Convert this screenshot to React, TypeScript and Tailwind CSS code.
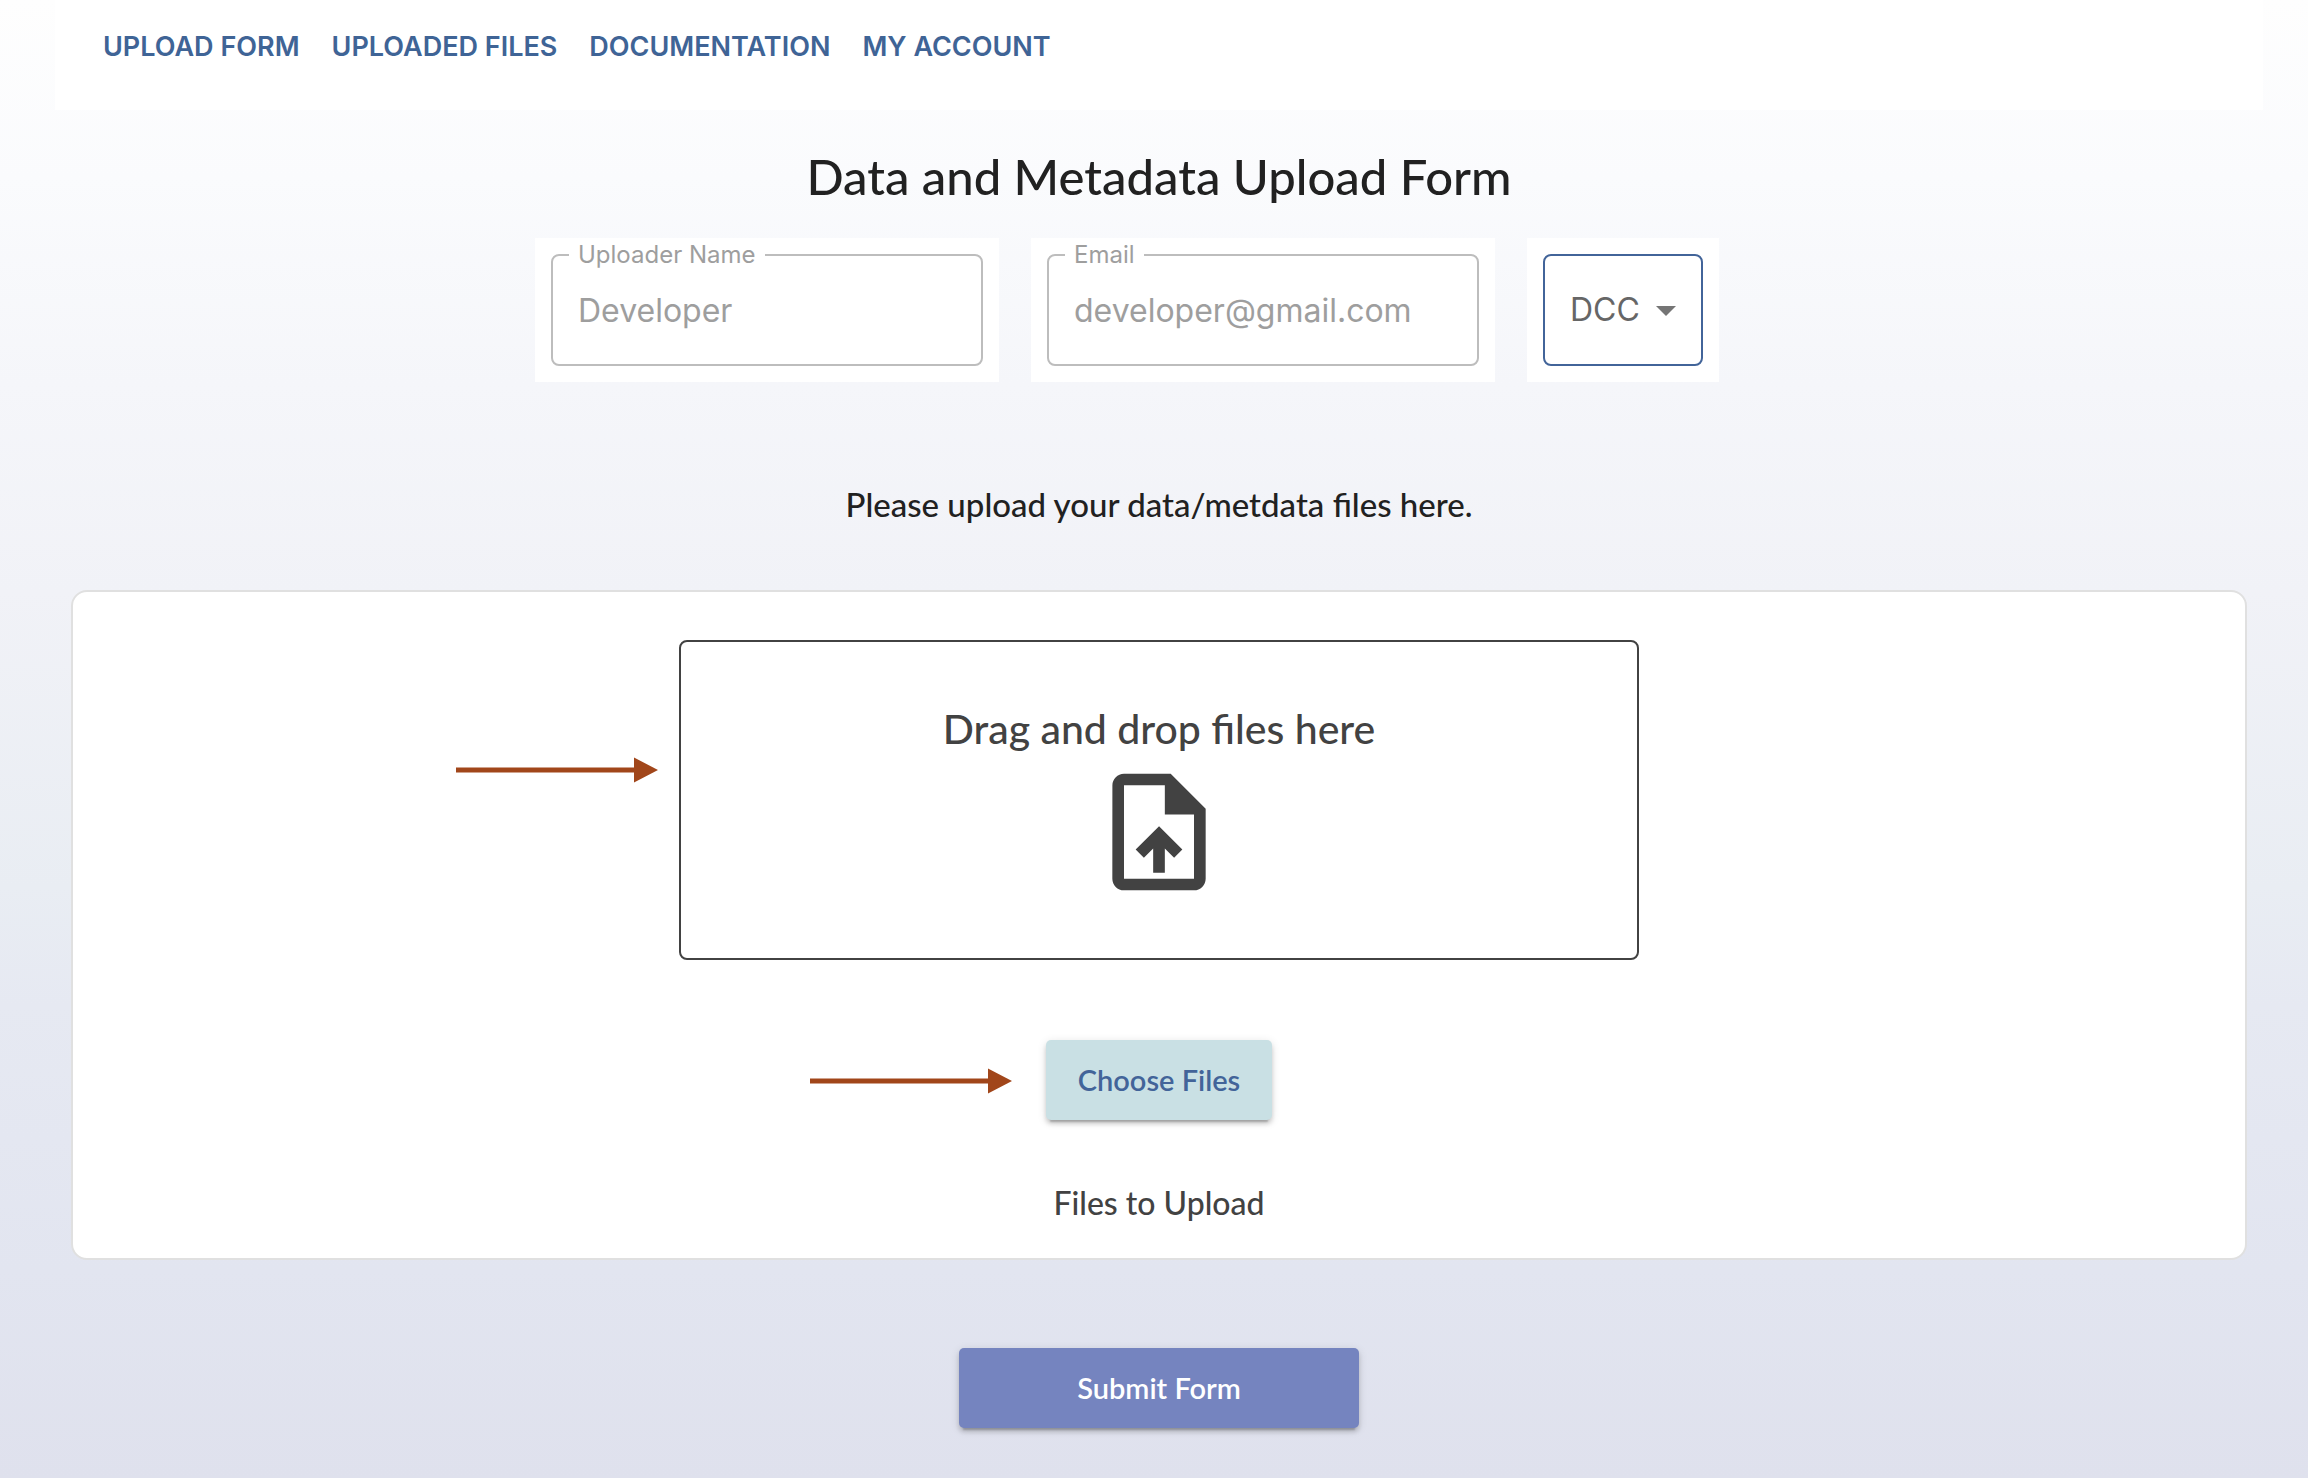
import React from "react";

const navLinks = ["UPLOAD FORM", "UPLOADED FILES", "DOCUMENTATION", "MY ACCOUNT"];

const raised =
  "shadow-[0_6px_2px_-4px_rgba(0,0,0,0.2),0_4px_4px_0_rgba(0,0,0,0.14),0_2px_10px_0_rgba(0,0,0,0.12)]";

function TextField({ id, label, value, type }: { id: string; label: string; value: string; type: string }) {
  return (
    <div className="w-[464px] bg-white px-4 pb-4 font-['Inter',sans-serif] font-normal text-[#9e9e9e]">
      <fieldset className="rounded-lg border-2 border-[#bdbdbd] px-4 pb-4">
        <legend className="px-[9px] text-2xl leading-[34px]">
          <label htmlFor={id}>{label}</label>
        </legend>
        <input
          id={id}
          type={type}
          defaultValue={value}
          disabled
          className="block h-[76px] w-full bg-transparent px-[9px] text-[32px]"
        />
      </fieldset>
    </div>
  );
}

function Arrow({ className }: { className: string }) {
  return (
    <svg aria-hidden="true" viewBox="0 0 202 26" className={`absolute h-[26px] w-[202px] ${className}`}>
      <path d="M0 10.5h178V0.5l24 12.5-24 12.5v-10H0z" fill="#a1461a" />
    </svg>
  );
}

function UploadIcon() {
  return (
    <svg aria-hidden="true" viewBox="0 0 24 24" fill="currentColor" className="size-[140px]">
      <path d="M14 2H6c-1.1 0-1.99.9-1.99 2L4 20c0 1.1.89 2 1.99 2H18c1.1 0 2-.9 2-2V8l-6-6zm4 18H6V4h7v5h5v11zM8 15.01l1.41 1.41L11 14.84V19h2v-4.16l1.59 1.59L16 15.01 12.01 11z" />
    </svg>
  );
}

export default function App() {
  return (
    <div className="min-h-screen bg-[linear-gradient(180deg,#fefefe_0%,#fafbfd_12%,#f5f6fa_26%,#f1f2f7_40%,#e9edf3_60%,#e6e9f2_68%,#e2e5f0_86%,#dfe1ed_100%)] pr-[45px] pb-[50px] pl-[55px] font-['Lato',sans-serif] font-medium text-[#212121]">
      <header className="bg-white">
        <nav className="flex gap-8 px-12 pt-[27px] pb-[43px] font-['Inter',sans-serif] text-[27px] leading-10 font-semibold text-[#3f6496]">
          {navLinks.map((name) => (
            <a key={name} href="#">
              {name}
            </a>
          ))}
        </nav>
      </header>

      <form className="flex flex-col items-center px-4" onSubmit={(e) => e.preventDefault()}>
        <h1 className="mt-10 text-[49px] leading-[52px]">Data and Metadata Upload Form</h1>

        <div className="mt-9 mr-16 flex gap-8">
          <TextField id="name" label="Uploader Name" value="Developer" type="text" />
          <TextField id="email" label="Email" value="developer@gmail.com" type="email" />
          <div className="relative bg-white p-4 text-[#666666]">
            <select
              aria-label="DCC"
              className="block h-28 w-40 appearance-none rounded-lg border-2 border-[#426499] bg-transparent pl-[25px] font-['Inter',sans-serif] text-[32px] font-normal"
            >
              <option>DCC</option>
            </select>
            <svg aria-hidden="true" viewBox="0 0 20 10" className="pointer-events-none absolute top-17 right-[43px] h-2.5 w-5">
              <path d="M0 0h20L10 10z" fill="#757575" />
            </svg>
          </div>
        </div>

        <p className="mt-[102px] text-[33px] leading-10">Please upload your data/metdata files here.</p>

        <section className="mt-[66px] flex w-full flex-col items-center rounded-2xl border-2 border-[#e0e0e0] bg-white px-8 pt-12 pb-9 text-[#424242]">
          <div className="relative flex min-h-80 w-full max-w-[960px] flex-col items-center rounded-lg border-2 border-[#424242] pt-16">
            <Arrow className="top-[115px] right-full mr-[23px]" />
            <h2 className="text-[41px] leading-[46px]">Drag and drop files here</h2>
            <div className="mt-2.5">
              <UploadIcon />
            </div>
          </div>

          <div className="relative mt-20">
            <Arrow className="top-7 right-full mr-[34px]" />
            <button
              type="button"
              className={`block h-20 w-[226px] rounded-[5px] bg-[#c9e0e4] text-[29px] font-semibold text-[#426499] ${raised}`}
            >
              Choose Files
            </button>
          </div>

          <h3 className="mt-16 text-[32px] leading-[38px]">Files to Upload</h3>
        </section>

        <button
          type="submit"
          className={`mt-[88px] h-20 w-[400px] rounded-[5px] bg-[#7584bf] text-[29px] font-semibold text-white ${raised}`}
        >
          Submit Form
        </button>
      </form>
    </div>
  );
}
